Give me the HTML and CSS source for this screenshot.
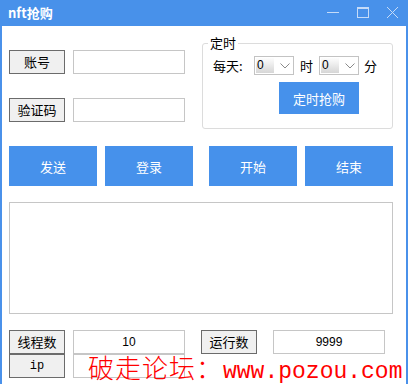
FILE: index.html
```html
<!DOCTYPE html>
<html lang="zh">
<head>
<meta charset="utf-8">
<title>nft抢购</title>
<link rel="stylesheet" href="styles.css">
</head>
<body>
<div class="window">
  <div class="titlebar">
    <span class="title">nft抢购</span>
    <div class="controls">
      <svg class="ctl" width="14" height="14" viewBox="0 0 14 14"><line x1="1" y1="5.5" x2="13" y2="5.5" stroke="#c5dbf8" stroke-width="1"/></svg>
      <svg class="ctl" width="14" height="14" viewBox="0 0 14 14"><rect x="1.5" y="0.5" width="11" height="10" fill="none" stroke="#c5dbf8" stroke-width="1"/><line x1="1.5" y1="1.5" x2="12.5" y2="1.5" stroke="#c5dbf8" stroke-width="1"/></svg>
      <svg class="ctl" width="14" height="14" viewBox="0 0 14 14"><path d="M1 0 L12 11 M12 0 L1 11" stroke="#c5dbf8" stroke-width="1" fill="none"/></svg>
    </div>
  </div>
  <div class="content">
    <div class="top">
      <div class="left">
        <div class="field"><button class="wbtn">账号</button><div class="input"></div></div>
        <div class="field"><button class="wbtn">验证码</button><div class="input"></div></div>
      </div>
      <fieldset class="group">
        <legend>定时</legend>
        <div class="timerow">
          <span class="lbl">每天:</span>
          <div class="select"><span class="val">0</span><svg class="chev" width="10" height="6" viewBox="0 0 10 6"><path d="M0.5 0.5 L5 5 L9.5 0.5" fill="none" stroke="#8a8a8a" stroke-width="1"/></svg></div>
          <span class="lbl">时</span>
          <div class="select"><span class="val">0</span><svg class="chev" width="10" height="6" viewBox="0 0 10 6"><path d="M0.5 0.5 L5 5 L9.5 0.5" fill="none" stroke="#8a8a8a" stroke-width="1"/></svg></div>
          <span class="lbl">分</span>
        </div>
        <button class="bbtn timed">定时抢购</button>
      </fieldset>
    </div>
    <div class="actions">
      <button class="bbtn act">发送</button>
      <button class="bbtn act">登录</button>
      <button class="bbtn act sep">开始</button>
      <button class="bbtn act">结束</button>
    </div>
    <div class="log"></div>
    <div class="bottom">
      <button class="wbtn">线程数</button>
      <div class="input num">10</div>
      <button class="wbtn">运行数</button>
      <div class="input num">9999</div>
      <button class="wbtn ip">ip</button>
      <div class="input"></div>
    </div>
    <div class="watermark"><span class="wm-cn">破走论坛：</span><span class="wm-en">www.pozou.com</span></div>
  </div>
</div>
</body>
</html>
```

FILE: styles.css
```css
* { box-sizing: border-box; }
html, body { margin: 0; padding: 0; }
body {
  width: 408px;
  height: 384px;
  overflow: hidden;
  background: #fff;
  font-family: "Noto Sans CJK SC", "Liberation Sans", sans-serif;
  font-size: 13px;
  color: #000;
}
.window {
  position: relative;
  width: 408px;
  height: 384px;
  border-left: 2px solid #4a91ea;
  border-right: 2px solid #4a91ea;
  background: #fff;
}
.titlebar {
  height: 26px;
  margin: 0 -2px;
  background: #4891ea;
  display: flex;
  align-items: center;
  justify-content: space-between;
  padding-left: 8px;
}
.title {
  color: #fff;
  font-weight: bold;
  font-size: 13px;
  line-height: 14px;
  margin-top: -1px;
}
.controls {
  display: flex;
  align-items: center;
  gap: 16px;
  padding-right: 8px;
  padding-top: 1px;
}
.ctl { display: block; }
.content {
  position: relative;
  padding: 10px 0 0 7px;
}
.top {
  display: flex;
  height: 93px;
}
.left {
  width: 176px;
  padding-top: 14px;
  display: flex;
  flex-direction: column;
  gap: 24px;
}
.field {
  display: flex;
  gap: 8px;
}
.wbtn {
  width: 56px;
  height: 24px;
  margin: 0;
  padding: 0;
  background: #f0f0f0;
  border: 1px solid #6b6b6b;
  font-family: "Noto Sans CJK SC", sans-serif;
  font-size: 13px;
  line-height: 20px;
  color: #000;
}
.input {
  width: 112px;
  height: 24px;
  border: 1px solid #c6c6c6;
  background: #fff;
}
.input.num {
  text-align: center;
  font-family: "Liberation Sans", sans-serif;
  font-size: 12px;
  line-height: 22px;
}
.group {
  margin: 0 0 0 17px;
  padding: 6px 10px 14px 10px;
  width: 191px;
  height: 93px;
  border: 1px solid #dcdcdc;
  border-radius: 3px;
  min-width: 0;
}
.group legend {
  padding: 0 2px;
  margin-left: -5px;
  font-size: 13px;
  line-height: 14px;
  color: #000;
}
.timerow {
  display: flex;
  align-items: center;
  height: 19px;
}
.lbl {
  font-size: 13px;
  line-height: 19px;
}
.timerow .lbl:first-child { width: 41px; }
.timerow .lbl:nth-child(3) { margin: 0 6px 0 6px; }
.timerow .lbl:last-child { margin-left: 5px; }
.select {
  width: 40px;
  height: 19px;
  border: 1px solid #c3c3c3;
  background: #fff;
  display: flex;
  align-items: center;
  padding: 1px;
}
.select .val {
  width: 18px;
  height: 15px;
  background: linear-gradient(#fdfdfd, #d6d6d6);
  font-family: "Liberation Sans", sans-serif;
  font-size: 12px;
  line-height: 15px;
  padding-left: 1px;
}
.chev { margin-left: 6px; display: block; }
.bbtn {
  margin: 0;
  padding: 0;
  border: none;
  background: #4691eb;
  color: #fff;
  font-family: "Noto Sans CJK SC", sans-serif;
  font-size: 13px;
}
.timed {
  display: block;
  width: 80px;
  height: 32px;
  margin: 7px 0 0 66px;
}
.actions {
  display: flex;
  gap: 8px;
  margin-top: 17px;
}
.act {
  width: 88px;
  height: 40px;
}
.act.sep { margin-left: 8px; }
.log {
  width: 384px;
  height: 112px;
  margin-top: 16px;
  border: 1px solid #c6c6c6;
}
.bottom {
  display: grid;
  grid-template-columns: 56px 120px 64px 112px;
  column-gap: 8px;
  grid-auto-rows: 24px;
  justify-items: start;
  margin-top: 16px;
}
.wbtn.ip {
  font-family: "Liberation Mono", monospace;
  font-size: 12px;
}
.watermark {
  position: absolute;
  left: 86px;
  top: 329px;
  color: #f00;
  white-space: nowrap;
  line-height: 24px;
}
.wm-cn {
  font-family: "Noto Sans CJK SC", sans-serif;
  font-size: 26px;
  font-weight: 300;
  letter-spacing: 1px;
}
.wm-en {
  font-family: "Liberation Mono", monospace;
  font-size: 23px;
}
```
